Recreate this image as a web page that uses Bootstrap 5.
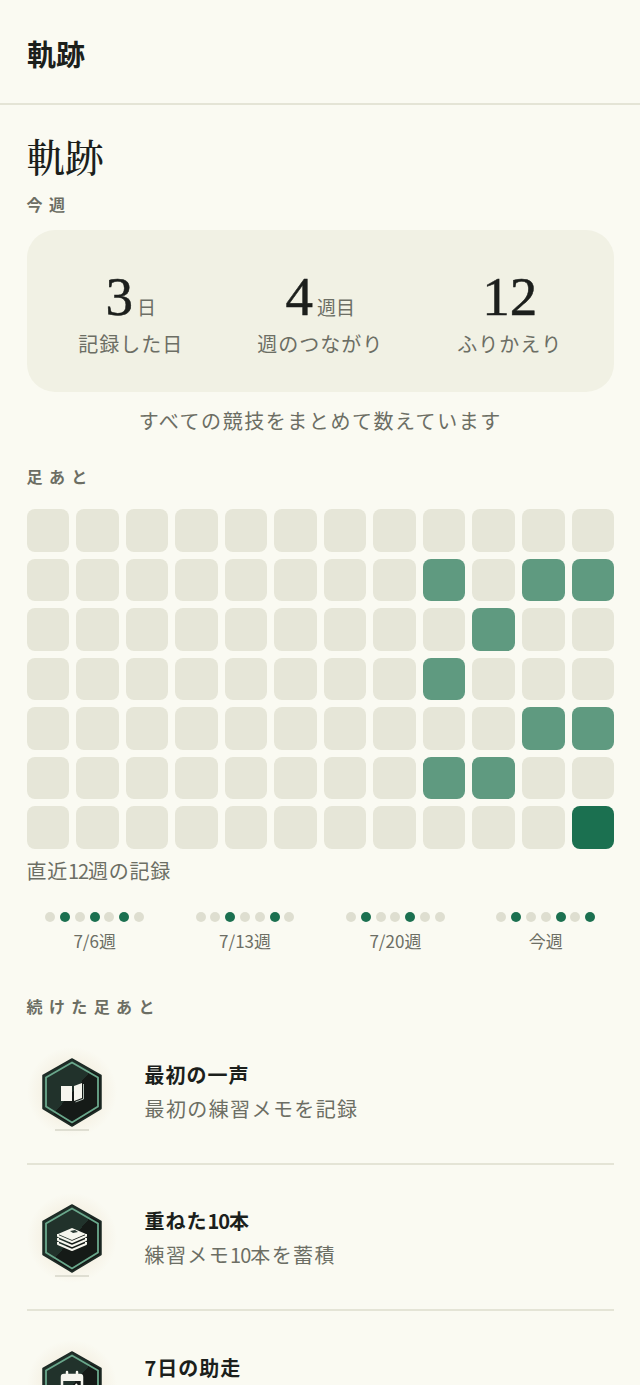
<!DOCTYPE html>
<html lang="ja">
<head>
  <meta charset="UTF-8">
  <title>軌跡</title>
  <link href="https://cdn.jsdelivr.net/npm/bootstrap@5.3.0/dist/css/bootstrap.min.css" rel="stylesheet">
  <style>
    html, body {
      height: 100%;
    }

    body {
      background: #fafaf2;
      font-family: "Noto Sans CJK JP", sans-serif;
      color: #1c1f1c;
      overflow: hidden;
    }

    .top-bar {
      height: 105px;
      padding: 3px 27px 0;
      border-bottom: 2px solid #e4e4d6;
    }

    .top-title {
      font-size: 29px;
      font-weight: 700;
      line-height: 1;
    }

    .page-body {
      padding: 0 26px 0 26.5px;
    }

    .page-title {
      font-family: "Noto Serif CJK JP", "Liberation Serif", "Noto Sans CJK JP", serif;
      font-size: 38.5px;
      font-weight: 500;
      line-height: 48px;
      margin: 27px 0 0;
    }

    .sec-label {
      font-size: 16px;
      font-weight: 700;
      line-height: 22px;
      letter-spacing: 6.4px;
      color: #6c6e64;
      margin: 0;
    }

    .label-first {
      margin-top: 13px;
    }

    .label-steps {
      margin-top: 30px;
    }

    .label-marks {
      margin-top: 42px;
    }

    .stat-box {
      margin-top: 15px;
      height: 162px;
      padding: 3px 9.5px 0;
      border-radius: 28px;
      background: #f1f1e4;
    }

    .stat-col {
      flex: 1 1 0;
    }

    .stat-num {
      font-family: "Liberation Serif", serif;
      font-size: 55px;
      line-height: 60px;
      -webkit-text-stroke: 0.5px #1c1f1c;
    }

    .stat-unit {
      font-size: 19px;
      color: #6c6e64;
      margin-left: 4px;
    }

    .stat-cap {
      font-size: 20px;
      line-height: 28px;
      letter-spacing: 1px;
      color: #6c6e64;
      margin-top: 3px;
    }

    .stat-note {
      font-size: 20px;
      line-height: 28px;
      letter-spacing: 1.55px;
      color: #6c6e64;
      margin-top: 15px;
    }

    .heat-grid {
      display: grid;
      grid-template-columns: repeat(12, 1fr);
      gap: 7px;
      margin-top: 22px;
    }

    .heat-cell {
      aspect-ratio: 1;
      border-radius: 8px;
      background: #e6e6d8;
    }

    .heat-cell.on {
      background: #5f9a80;
    }

    .heat-cell.now {
      background: #1b7050;
    }

    .heat-note {
      font-size: 20px;
      line-height: 28px;
      letter-spacing: 0.7px;
      color: #6c6e64;
      margin-top: 8px;
    }

    .week-row {
      display: grid;
      grid-template-columns: repeat(4, 1fr);
      gap: 14px;
      margin-top: 27px;
    }

    .week-dots {
      display: flex;
      justify-content: center;
      gap: 4.8px;
    }

    .week-dot {
      width: 10px;
      height: 10px;
      border-radius: 50%;
      background: #deded0;
    }

    .week-dot.on {
      background: #1b7050;
    }

    .week-cap {
      font-size: 17px;
      line-height: 24px;
      color: #6c6e64;
      margin-top: 7px;
    }

    .mark-list {
      margin-top: 2px;
    }

    .mark-item {
      height: 146px;
      padding-top: 2px;
      border-bottom: 2px solid #e4e4d6;
      gap: 28px;
    }

    .mark-item:last-child {
      border-bottom: 0;
    }

    .mark-badge {
      width: 90px;
      height: 90px;
      flex: none;
    }

    .mark-name {
      font-size: 20px;
      font-weight: 700;
      line-height: 30px;
      letter-spacing: 1px;
    }

    .mark-desc {
      font-size: 20px;
      line-height: 30px;
      letter-spacing: 1.4px;
      color: #6c6e64;
      margin-top: 4px;
    }

    .tight-num {
      letter-spacing: -1px;
    }
  </style>
</head>
<body>
  <header class="top-bar d-flex align-items-center">
    <div class="top-title">軌跡</div>
  </header>

  <main class="page-body">
    <h1 class="page-title">軌跡</h1>
    <p class="sec-label label-first">今週</p>

    <section class="stat-box d-flex align-items-center text-center">
      <div class="stat-col">
        <div><span class="stat-num">3</span><span class="stat-unit">日</span></div>
        <div class="stat-cap">記録した日</div>
      </div>
      <div class="stat-col">
        <div><span class="stat-num">4</span><span class="stat-unit">週目</span></div>
        <div class="stat-cap">週のつながり</div>
      </div>
      <div class="stat-col">
        <div><span class="stat-num">12</span></div>
        <div class="stat-cap">ふりかえり</div>
      </div>
    </section>
    <div class="stat-note text-center">すべての競技をまとめて数えています</div>

    <p class="sec-label label-steps">足あと</p>
    <div class="heat-grid" id="heat-grid"></div>
    <div class="heat-note">直近<span class="tight-num">12</span>週の記録</div>
    <div class="week-row text-center" id="week-row"></div>

    <p class="sec-label label-marks">続けた足あと</p>

    <div class="mark-list">
      <div class="d-flex align-items-center mark-item">
        <svg class="mark-badge" viewBox="0 0 90 90">
          <use href="#hex-base"></use>
          <path d="M34 39h11v15H34z" fill="#f6f6ee"/>
          <path d="M47 39l8-3v15l-8 3z" fill="#f6f6ee"/>
          <path d="M56.500 37v15l-8 3" fill="none" stroke="#aebbb3" stroke-width="1"/>
        </svg>
        <div>
          <div class="mark-name">最初の一声</div>
          <div class="mark-desc">最初の練習メモを記録</div>
        </div>
      </div>

      <div class="d-flex align-items-center mark-item">
        <svg class="mark-badge" viewBox="0 0 90 90">
          <use href="#hex-base"></use>
          <g fill="none" stroke="#f6f6ee" stroke-width="2" stroke-linejoin="round">
            <path d="M31 49v2l14 6 14-6v-2"/>
            <path d="M31 45v2l14 6 14-6v-2"/>
            <path d="M31 41v2l14 6 14-6v-2"/>
          </g>
          <path d="M31 41l14-6 14 6-14 6z" fill="#f6f6ee"/>
          <path d="M43 38l5-1 3 2-5 1z" fill="#2a3a33"/>
        </svg>
        <div>
          <div class="mark-name">重ねた<span class="tight-num">10</span>本</div>
          <div class="mark-desc">練習メモ<span class="tight-num">10</span>本を蓄積</div>
        </div>
      </div>

      <div class="d-flex align-items-center mark-item">
        <svg class="mark-badge" viewBox="0 0 90 90">
          <use href="#hex-base"></use>
          <rect x="35" y="35" width="20" height="20" rx="2" fill="none" stroke="#f6f6ee" stroke-width="2.500"/>
          <path d="M35 36h20v5H35z" fill="#f6f6ee"/>
          <path d="M40 32v5M50 32v5" stroke="#f6f6ee" stroke-width="2.500" stroke-linecap="round"/>
          <path d="M41 48l3 3 6-7" fill="none" stroke="#f6f6ee" stroke-width="2"/>
        </svg>
        <div>
          <div class="mark-name">7日の助走</div>
          <div class="mark-desc">&nbsp;</div>
        </div>
      </div>
    </div>
  </main>

  <!-- shared badge shape -->
  <svg width="0" height="0" class="d-block">
    <defs>
      <radialGradient id="badge-glow">
        <stop offset="0.6" stop-color="#f5f1e4"/>
        <stop offset="1" stop-color="#fafaf2"/>
      </radialGradient>
      <linearGradient id="hex-fill" x1="0" y1="0" x2="1" y2="1">
        <stop offset="0.5" stop-color="#21322b"/>
        <stop offset="0.5" stop-color="#151a17"/>
      </linearGradient>
      <g id="hex-base">
        <circle cx="45" cy="45" r="45" fill="url(#badge-glow)"/>
        <path d="M28 83h34" stroke="#d6d6c8" stroke-width="1.500"/>
        <path d="M45 12l29 16.500v33L45 79 16 61.500v-33z" fill="url(#hex-fill)" stroke="#1d2a25" stroke-width="1.500" stroke-linejoin="round"/>
        <path d="M45 15.500l26 15v29L45 75.500 19 59.500v-29z" fill="none" stroke="#6aa88c" stroke-width="1.800"/>
      </g>
    </defs>
  </svg>

  <script>
    // one entry per week, one digit per weekday: 0 none, 1 logged, 2 today
    const weeks = [
      { label: "7/6週", days: [0, 1, 0, 1, 0, 1, 0] },
      { label: "7/13週", days: [0, 0, 1, 0, 0, 1, 0] },
      { label: "7/20週", days: [0, 1, 0, 0, 1, 0, 0] },
      { label: "今週", days: [0, 1, 0, 0, 1, 0, 2] }
    ];

    const grid = document.getElementById("heat-grid");
    for (let day = 0; day < 7; day++) {
      for (let col = 0; col < 12; col++) {
        const cell = document.createElement("div");
        const week = weeks[col - 8];
        const v = week ? week.days[day] : 0;
        cell.className = "heat-cell" + (v === 1 ? " on" : v === 2 ? " now" : "");
        grid.appendChild(cell);
      }
    }

    const row = document.getElementById("week-row");
    weeks.forEach(week => {
      const dots = week.days
        .map(v => `<div class="week-dot${v ? " on" : ""}"></div>`)
        .join("");
      const col = document.createElement("div");
      col.innerHTML = `<div class="week-dots">${dots}</div><div class="week-cap">${week.label}</div>`;
      row.appendChild(col);
    });
  </script>
  <script src="https://cdn.jsdelivr.net/npm/bootstrap@5.3.0/dist/js/bootstrap.bundle.min.js"></script>
</body>
</html>
